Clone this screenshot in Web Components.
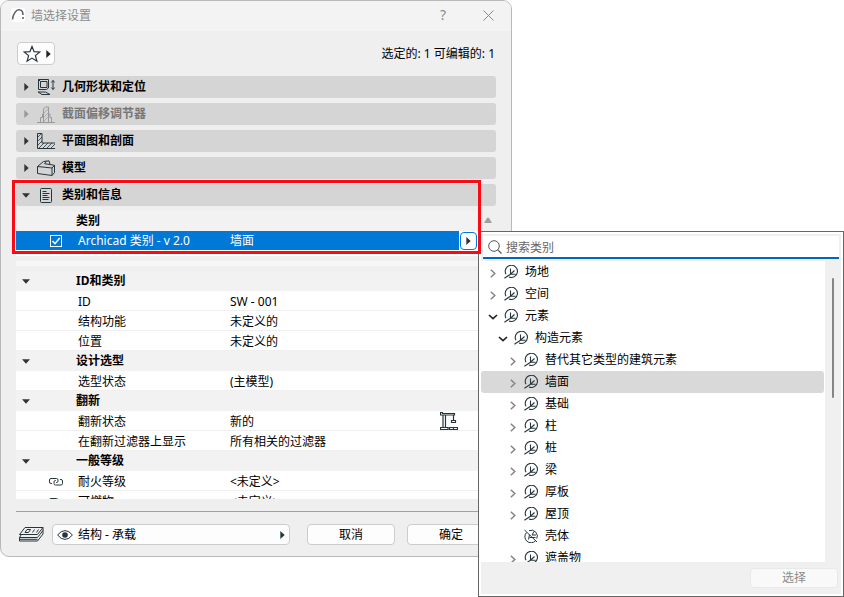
<!DOCTYPE html>
<html lang="zh-CN">
<head>
<meta charset="utf-8">
<title>墙选择设置</title>
<style>
  html, body { height: 100%; margin: 0; }
  body { background: #fff; color: #000; font: 12px/20px "Noto Sans", "Noto Sans CJK SC", sans-serif; }
</style>
</head>
<body>
<settings-page></settings-page>
<script>
const svg = (w, h, body, sw = 1) =>
  `<svg width="${w}" height="${h}" viewBox="0 0 ${w} ${h}" fill="none" stroke="currentColor" stroke-width="${sw}" aria-hidden="true">${body}</svg>`;

const ICONS = {
  app: svg(14, 14, '<rect width="14" height="14" rx="2" fill="#fff" stroke="none"/><path d="M1.500 11.500C2 6 5 1.800 8 1.800c3 0 4 2.200 4 5.200" stroke="#62626e" stroke-width="1.600"/><path d="M12 9v2" stroke="#62626e" stroke-width="1.600"/>'),
  close: svg(11, 11, '<path d="M.5.5l10 10M10.500.5l-10 10"/>'),
  star: svg(18, 18, '<path d="M9 1.500l2.100 5.200 5.700.3-4.400 3.600 1.500 5.600L9 13.100l-4.900 3.100 1.500-5.600L1.200 7l5.700-.3z" stroke="#24343b" stroke-width="1.200"/>'),
  right: svg(5, 8, '<path d="M.3 0L4.700 4 .3 8z" fill="currentColor" stroke="none"/>'),
  down: svg(8, 5, '<path d="M0 .3h8L4 4.700z" fill="currentColor" stroke="none"/>'),
  up: svg(8, 6, '<path d="M0 6L3 1q1-1 2 0l3 5z" fill="currentColor" stroke="none"/>'),
  geometry: svg(18, 17, '<path d="M1.500.5v10h8l2-1.500V.500zM3.500 2.500h6.500v6h-6.500zM1.500.5l2 2M1 13h7.500l4.500 2.500H5zM16 1.500v9M14.300 3.500L16 1.500l1.700 2M14.300 8.500L16 10.500l1.700-2"/>'),
  profile: svg(18, 17, '<path d="M0 16.500h18M3.500 16.500v-5h2.500M5.500 11.500V8h1.500M6.500 16V3l2-2h3v15M11.500 8h1.500v3.500h1.500v5"/><path d="M6.500 7.500l5-5M6.500 11.500l5-5M6.500 15.500l5-5" stroke-width=".7"/>'),
  plan: svg(18, 16, '<path d="M.5.5v15H18M.5.5h4.500v9.500H18"/><path d="M.5 4.500l4-4M.5 8.500L5 4M.5 12.500L5 8M2 15l5-5M6 15l5-5M10 15l5-5M14 15l4-4" stroke-width=".8"/>'),
  model: svg(18, 16, '<path d="M.5 6.500l6-5 5.500-.7 1 3.700 4.500.8v7.200l-2.500 3-14.500-2zM.5 6.500L15 8l2.500-2.700M15 8v7.500M7.500 3.700l5.500.8M7.500 3.700L9.500 1"/>'),
  info: svg(12, 15, '<rect x=".5" y=".5" width="11" height="14" rx="1"/><path d="M2.500 3.500h4M2.500 5.500h7M2.500 7.500h5M2.500 9.500h7M2.500 11.500h6"/>'),
  link: svg(14, 8, '<path d="M3 5.500H2A1.500 1.500 0 0 1 .5 4V2A1.500 1.500 0 0 1 2 .5h5.500A1.500 1.500 0 0 1 9 2v1A1.500 1.500 0 0 1 7.500 4.500H7M11 1.500h1A1.500 1.500 0 0 1 13.500 3v2.500A1.500 1.500 0 0 1 12 7H6.500A1.500 1.500 0 0 1 5 5.500V4A1.500 1.500 0 0 1 6.500 2.500H7"/>'),
  crane: svg(18, 18, '<path d="M.5.5h2v1h12v1.500H.5zM3 3v12.500M5.500 3v12.500M.5 15.500h7.500v2H.5zM13.500 3v5M11.500 8.500h4v2h-4zM9.500 15.500h8v2h-8zM13.500 15.500v2" stroke-width="1.200"/>'),
  layers: svg(26, 15, '<path d="M7 .5h18L19.500 7.500H1.500zM3 8l-1.500 2.500h18L25 3.500M1.500 10.500v3.500h18L25 7M25 .5V7M1.500 12.300h18"/><path d="M9 2.500h3.500l-2 3H7zM14.500 5.500l2-3M18.500 5.500l2-3"/>'),
  eye: svg(16, 10, '<path d="M.6 5Q4 .6 8 .6T15.400 5Q12 9.400 8 9.400T.6 5z"/><circle cx="8" cy="5" r="2.800" fill="currentColor" stroke="none"/>'),
  search: svg(14, 14, '<circle cx="6" cy="6" r="5.300"/><path d="M9.800 9.800l3.700 3.700" stroke-width="1.200"/>'),
  leaf: svg(14, 14, '<path d="M2 9.300A6.100 6.100 0 1 1 5 12M.4 13.300L6.500 9.200 10.500 5.500M6.500 3.500v5.700h5"/>', 1.1),
  noleaf: svg(14, 14, '<path d="M.5 1l12.500 12M2.500 3.500a6 6 0 1 0 9 8.300M5 1.700a6 6 0 0 1 7.800 8M5.500 5.500l-1 5M5.500 8.500h6M8 6l2-3.500M8 6h4"/>'),
  chevRight: svg(6, 9, '<path d="M.8.8l4 3.700-4 3.700" stroke-width="1.500"/>'),
  chevDown: svg(10, 6, '<path d="M1 1l4 3.700L9 1" stroke-width="1.700"/>')
};

const BASE = `*{box-sizing:border-box} svg{display:block;flex:none}
  button,input,select{font:inherit;color:inherit;margin:0}
  button{border:1px solid #ccc;border-radius:4px;background:#fdfdfd;padding:0}`;

class Base extends HTMLElement {
  connectedCallback() {
    if (this.shadowRoot) return;
    this.attachShadow({ mode: 'open' }).innerHTML = `<style>${BASE}${this.css()}</style>${this.html()}`;
  }
}

customElements.define('section-bar', class extends Base {
  css() { return `:host{display:block}
    button{display:grid;grid-template-columns:14px 20px 1fr;column-gap:3px;align-items:center;width:100%;height:22px;
      padding:0 0 0 3px;border:0;border-radius:3px;background:#d5d5d5;font-weight:bold;text-align:left}
    .mark,.icon{display:grid;place-items:center;color:#333}
    .icon{color:#26363d}
    .label{padding-left:3px}
    button:disabled span{color:#999} button:disabled .label{color:#777}`; }
  html() {
    const open = this.hasAttribute('open');
    return `<button ${this.hasAttribute('disabled') ? 'disabled' : ''} aria-expanded="${open}">
      <span class="mark">${ICONS[open ? 'down' : 'right']}</span><span class="icon">${ICONS[this.getAttribute('icon')]}</span>
      <span class="label"><slot></slot></span></button>`;
  }
});

customElements.define('class-panel', class extends Base {
  css() { return `:host{display:grid;grid-template-columns:1fr 19px;background:#fff;padding-bottom:6px}
    .head{grid-column:1/3;height:20px;padding-left:60px;background:#f2f2f2;font-weight:bold}
    .row{display:grid;grid-template-columns:62px 152px 1fr;height:19px;background:#0078d7;color:#fff;line-height:19px}
    .row span:first-child{display:grid;place-items:center;padding-left:18px}
    input{appearance:none;width:12px;height:12px;border:1px solid #fff;
      background:url("data:image/svg+xml,%3Csvg xmlns='http://www.w3.org/2000/svg' viewBox='0 0 10 10'%3E%3Cpath d='M1.500 5l2.500 2.700L8.700 2' fill='none' stroke='white' stroke-width='1.500'/%3E%3C/svg%3E")}
    button{display:grid;place-items:center;width:17px;height:18px;margin:1px 0 0 1px;border-color:#0078d7;color:#333}`; }
  html() { return `<div class="head">类别</div>
    <div class="row"><span><input type="checkbox" id="c" checked></span><label for="c">Archicad 类别 - v 2.0</label><span>墙面</span></div>
    <button aria-label="选择类别">${ICONS.right}</button>`; }
});

const PROPS = [
  ['ID和类别'], ['ID', 'SW - 001'], ['结构功能', '未定义的'], ['位置', '未定义的'],
  ['设计选型'], ['选型状态', '(主模型)'],
  ['翻新'], ['翻新状态', '新的', '', 'crane'], ['在翻新过滤器上显示', '所有相关的过滤器'],
  ['一般等级'], ['耐火等级', '<未定义>', 'link'], ['可燃物', '<未定义>', 'link']
];

customElements.define('property-list', class extends Base {
  css() { return `:host{display:block;min-height:0;overflow:hidden;border-top:5px solid #f6f6f6;padding-top:5px}
    table{width:100%;table-layout:fixed;border-collapse:separate;border-spacing:0}
    col.a{width:60px} col.b{width:154px} col.d{width:38px}
    td,th{height:20px;padding:2px 0 0;line-height:17px;text-align:left;white-space:nowrap}
    th{padding:0;background:#f2f2f2;line-height:20px} td{background:#fff;border-bottom:1px solid #efefef}
    .mark svg{margin-left:6px;color:#333} .lead svg{margin-left:33px;color:#26363d} .tail{padding:0} .tail svg{color:#26363d}
    .name{padding-left:2px}`; }
  html() {
    const esc = s => s.replace('<', '&lt;');
    return `<table><colgroup><col class="a"><col class="b"><col><col class="d"></colgroup>${PROPS.map(([n, v, lead, tail]) =>
      v ? `<tr><td class="lead">${ICONS[lead] || ''}</td><td class="name">${n}</td><td>${esc(v)}</td><td class="tail">${ICONS[tail] || ''}</td></tr>`
        : `<tr><th class="mark">${ICONS.down}</th><th colspan="3" scope="rowgroup">${n}</th></tr>`).join('')}</table>`;
  }
});

customElements.define('wall-dialog', class extends Base {
  css() { return `:host{display:flex;flex-direction:column;border:1px solid #b9b9b9;border-radius:9px;background:#efefef;overflow:clip}
    header{display:flex;align-items:center;height:30px;padding:0 17px 2px 10px;background:#f3f3f3;color:#8b8b8b}
    h1{flex:1;margin:0 0 0 6px;padding-top:2px;font-size:12px;font-weight:normal}
    header button{display:grid;place-items:center;width:12px;height:20px;border:0;background:none}
    header .help{margin-right:33px;font-size:14px}
    .top{display:flex;justify-content:space-between;align-items:center;padding:11px 16px 11px 16px}
    .fav{display:flex;align-items:center;gap:5px;width:38px;height:23px;padding-left:5px;color:#222}
    .bars{display:grid;gap:5px;padding:0 15px}
    .class{position:relative;display:grid;grid-template-columns:1fr 33px;row-gap:5px;padding:5px 0 5px 15px}
    section-bar{min-width:0}
    .class section-bar{grid-column:1/3;margin-right:15px}
    .scroll{justify-self:center;margin:6px 13px 0 0;color:#a0a0a0}
    .mark{position:absolute;z-index:5;left:11px;top:1px;right:30px;height:74px;border:3px solid #fa0a14;pointer-events:none}
    property-list{flex:1;margin:0 33px 0 15px}
    footer{display:grid;grid-template-columns:26px minmax(0,1fr) 88px 88px;column-gap:12px;align-items:center;margin:12px 16px 0 15px;padding:12px 0 11px 2px;
      border-top:1px solid #a0a0a0;color:#26363d}
    .pick{display:flex;align-items:center;height:21px;margin:0 5px 0 -4px;padding:0 4px;border:1px solid #ccc;border-radius:4px;background:#fdfdfd}
    select{flex:1;min-width:0;appearance:none;border:0;background:none;padding:0 0 0 5px;color:#000}
    footer button{height:21px;line-height:19px;color:#000}`; }
  html() { return `<header>${ICONS.app}<h1>墙选择设置</h1><button class="help" aria-label="帮助">?</button><button aria-label="关闭">${ICONS.close}</button></header>
    <div class="top"><button class="fav" aria-label="收藏夹">${ICONS.star}${ICONS.right}</button><span>选定的: 1 可编辑的: 1</span></div>
    <div class="bars"><section-bar icon="geometry">几何形状和定位</section-bar><section-bar icon="profile" disabled>截面偏移调节器</section-bar>
      <section-bar icon="plan">平面图和剖面</section-bar><section-bar icon="model">模型</section-bar></div>
    <div class="class"><section-bar icon="info" open>类别和信息</section-bar><class-panel></class-panel><span class="scroll">${ICONS.up}</span><div class="mark"></div></div>
    <property-list></property-list>
    <footer>${ICONS.layers}<div class="pick">${ICONS.eye}<select aria-label="图层"><option>结构 - 承载</option></select>${ICONS.right}</div>
      <button>取消</button><button>确定</button></footer>`; }
});

customElements.define('tree-item', class extends Base {
  css() { return `:host{display:flex;align-items:center;height:22px;flex:none;margin-right:1px;padding-left:calc(6px + var(--level) * 10px);border-radius:3px}
    :host([selected]){background:#d9d9d9}
    .chev{display:grid;place-items:center;width:11px;margin-right:6px;padding-top:2px;color:#858585}
    .chev.open{color:#222}
    .icon{margin-right:7px;color:#26363d}`; }
  html() {
    const s = this.getAttribute('state');
    return `<span class="chev ${s}">${s === 'leaf' ? '' : ICONS[s === 'open' ? 'chevDown' : 'chevRight']}</span>
      <span class="icon">${ICONS[s === 'leaf' ? 'noleaf' : 'leaf']}</span><slot></slot>`;
  }
});

const TREE = [[0, '场地'], [0, '空间'], [0, '元素', 'open'], [1, '构造元素', 'open'], [2, '替代其它类型的建筑元素'], [2, '墙面'],
  [2, '基础'], [2, '柱'], [2, '桩'], [2, '梁'], [2, '厚板'], [2, '屋顶'], [2, '壳体', 'leaf'], [2, '遮盖物']];

customElements.define('class-picker', class extends Base {
  css() { return `:host{display:flex;border:1px solid #666;background:#fff;padding:2px}
    .in{flex:1;display:flex;flex-direction:column;min-width:0;background:#f0f0f0}
    .search{display:flex;align-items:center;gap:4px;height:23px;margin:2px 2px 2px;padding-left:5px;background:#fff;border-bottom:2px solid #0067c0;color:#555}
    input{flex:1;min-width:0;height:21px;border:0;outline:0;padding:2px 0 0;background:none} input::placeholder{color:#666;opacity:1}
    .mid{flex:1;min-height:0;display:flex}
    .tree{flex:1;min-width:0;display:flex;flex-direction:column;overflow:hidden;background:#fff}
    .bar{width:16px;padding:17px 7px 0} .bar i{display:block;height:120px;background:#858585;border-radius:1px}
    footer{display:flex;justify-content:flex-end;padding:6px 3px 6px}
    button{width:88px;height:20px;border-color:#e8e8e8;background:#f9f9f9;line-height:18px;color:#8a8a8a}`; }
  html() { return `<div class="in"><div class="search">${ICONS.search}<input type="text" placeholder="搜索类别" aria-label="搜索类别"></div>
    <div class="mid"><div class="tree" role="tree">${TREE.map(([l, t, s = 'closed']) =>
      `<tree-item role="treeitem" style="--level:${l}" state="${s}"${t === '墙面' ? ' selected' : ''}>${t}</tree-item>`).join('')}</div>
      <div class="bar"><i></i></div></div>
    <footer><button disabled>选择</button></footer></div>`; }
});

customElements.define('settings-page', class extends Base {
  css() { return `:host{display:block;position:relative;height:100%;min-height:480px}
    wall-dialog{height:calc(100% - 40px);margin-right:332px}
    class-picker{position:absolute;z-index:2;top:231px;right:0;bottom:0;width:366px}`; }
  html() { return `<wall-dialog></wall-dialog><class-picker></class-picker>`; }
});
</script>
</body>
</html>
